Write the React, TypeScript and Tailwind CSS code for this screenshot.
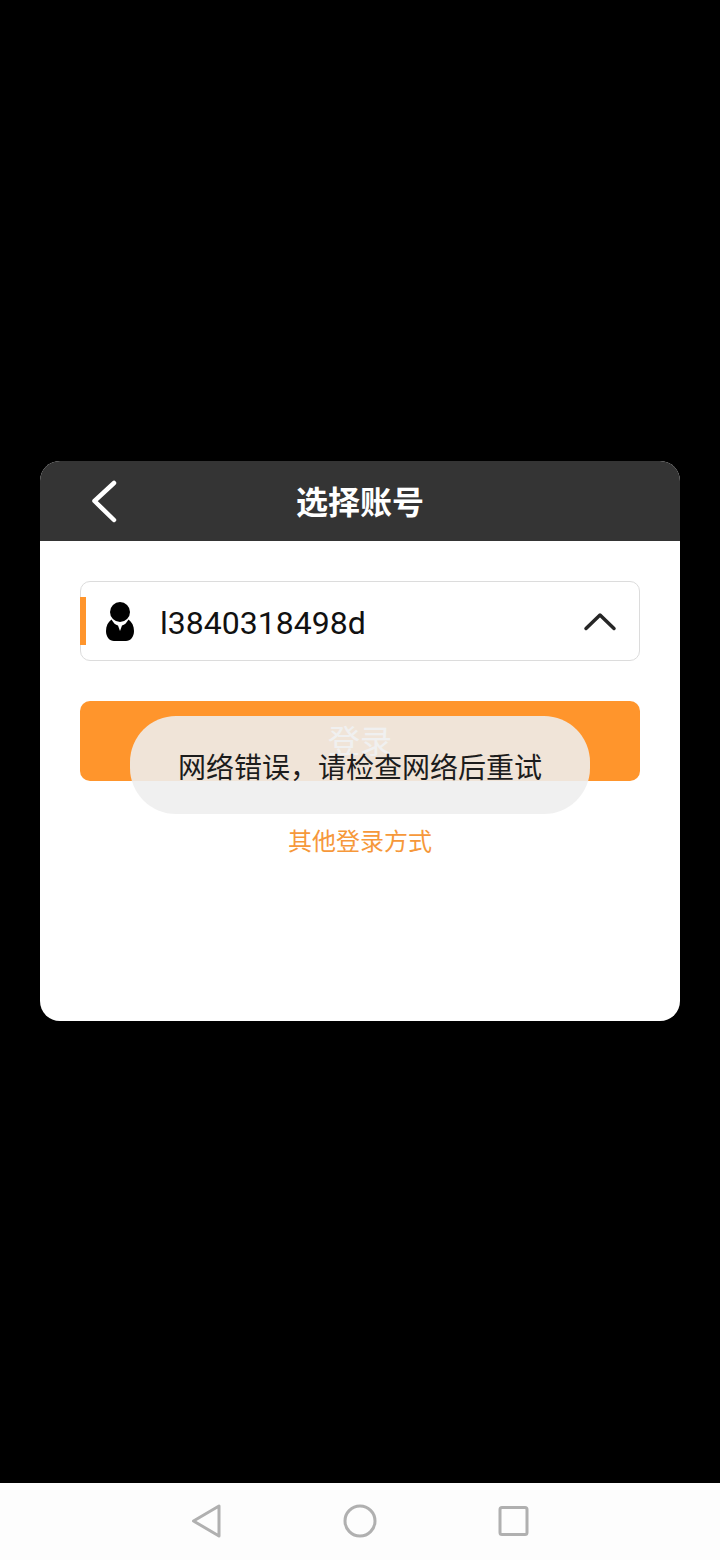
const font = "font-['Noto_Sans','Noto_Sans_CJK_SC',sans-serif]";

const App = () => {
  return (
    <div className={`flex h-[1560px] w-[720px] flex-col bg-black ${font}`}>
      <div className="flex flex-1 items-center justify-center pb-px">
        <div className="relative w-[640px] overflow-hidden rounded-[20px] bg-white">
          <div className="relative flex h-20 items-center justify-center bg-[#343434]">
            <svg className="absolute left-[48px] top-[18px]" width="32" height="44" viewBox="0 0 32 44" fill="none">
              <path d="M26 4 L6.500 22 L26 41" stroke="#fff" strokeWidth="4.500" strokeLinecap="round" strokeLinejoin="round" />
            </svg>
            <span className="pt-[2px] text-[32px] font-bold leading-none text-white">选择账号</span>
          </div>
          <div className="flex flex-col px-10 pb-10 pt-10">
            <div className="flex h-20 items-center rounded-[10px] border border-[#dcdcdc] bg-white">
              <div className="-ml-px h-12 w-[6px] bg-[#ff952c]" />
              <svg className="ml-[20px]" width="28" height="39" viewBox="0 0 28 39" fill="#000">
                <circle cx="14" cy="10" r="10" />
                <path d="M5.500 17.500 C2 20 0 24 0 29 C0 35 3.500 39 8 39 L20 39 C24.500 39 28 35 28 29 C28 24 26 20 22.500 17.500 C20.500 21 18.500 23 16 23.500 L14 29 L12 23.500 C9.500 23 7.500 21 5.500 17.500 Z" />
              </svg>
              <span className="ml-[26px] flex-1 pt-[3px] font-['Roboto','Noto_Sans',sans-serif] text-[32px] leading-none text-[#111]">l3840318498d</span>
              <svg className="mr-[22px]" width="34" height="22" viewBox="0 0 34 22" fill="none">
                <path d="M3 18.500 L17 5 L31 18.500" stroke="#262626" strokeWidth="3.500" strokeLinecap="round" strokeLinejoin="round" />
              </svg>
            </div>
            <button className="mt-10 flex h-20 items-center justify-center rounded-[10px] bg-[#ff952c] text-[32px] text-white">
              登录
            </button>
            <div className="mt-[44px] text-center text-[24px] leading-[32px] text-[#f6983a]">其他登录方式</div>
            <div className="h-[124px]" />
          </div>
          {/* toast */}
          <div className="absolute left-[90px] top-[255px] flex h-[98px] w-[460px] items-center justify-center rounded-[46px] bg-[#eeeeee]/[0.89] pt-[4px] text-[28px] leading-none text-[#1c1c1c]">
            网络错误，请检查网络后重试
          </div>
        </div>
      </div>
      <div className="flex h-[77px] items-center justify-center gap-[106px] bg-[#fdfdfd] pb-[2px]">
        <svg width="60" height="36" viewBox="0 0 60 36" fill="none">
          <path d="M43 3 L43 33 L17.500 18 Z" stroke="#b0b0b0" strokeWidth="3" strokeLinejoin="round" />
        </svg>
        <svg width="36" height="36" viewBox="0 0 36 36" fill="none">
          <circle cx="18" cy="18" r="15" stroke="#b0b0b0" strokeWidth="3" />
        </svg>
        <svg width="60" height="36" viewBox="0 0 60 36" fill="none">
          <rect x="16" y="4.500" width="27" height="27" rx="2" stroke="#b0b0b0" strokeWidth="3" />
        </svg>
      </div>
    </div>
  );
};

export default App;
